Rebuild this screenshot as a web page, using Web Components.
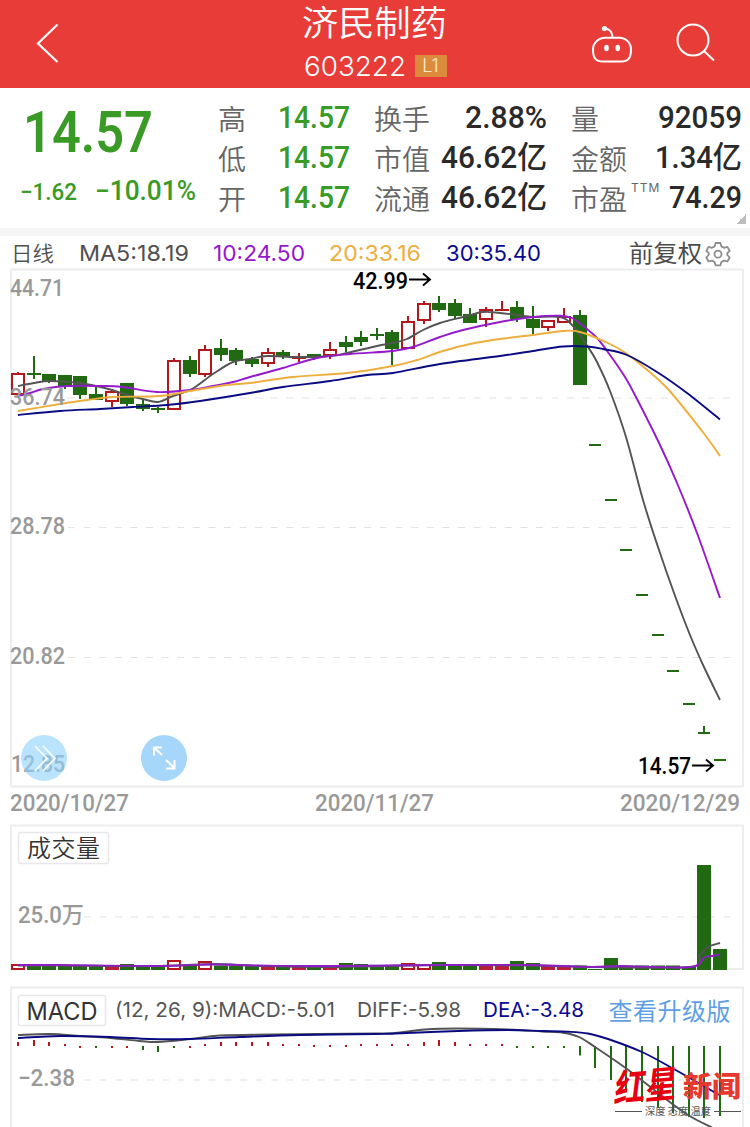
<!DOCTYPE html>
<html lang="zh-CN">
<head>
<meta charset="utf-8">
<title>济民制药 603222</title>
<style>
  html, body { margin: 0; padding: 0; }
  body {
    width: 750px;
    height: 1127px;
    overflow: hidden;
    background: #fff;
    font-family: Inter, "Noto Sans CJK SC", sans-serif;
  }
</style>
</head>
<body>
<stock-page></stock-page>

<script>
const DIN = 'Roboto, "Noto Sans CJK SC", sans-serif';
const UI = 'Inter, "Noto Sans CJK SC", sans-serif';
const GREEN = '#216a12';
const RED = '#b3191c';
const STEP = 15.6;
const cx = i => 18 + STEP * i;

/** Base class: attaches an open shadow root and fills it from render(). */
class BaseElement extends HTMLElement {
  connectedCallback() {
    if (this.shadowRoot) return;
    this.attachShadow({ mode: 'open' }).innerHTML = this.render();
    this.ready();
  }
  ready() {}
}

/**
 * Text squeezed or stretched to a fixed width.
 * @attr {number} w - target width in px
 */
class FitText extends BaseElement {
  render() {
    return `
      <style>
        :host { display: inline-block; white-space: nowrap; flex: none; }
        span { display: inline-block; transform-origin: 0 50%; }
      </style>
      <span><slot></slot></span>`;
  }
  ready() {
    const w = parseFloat(this.getAttribute('w'));
    const span = this.shadowRoot.querySelector('span');
    const natural = span.getBoundingClientRect().width;
    this.style.width = `${w}px`;
    if (natural) span.style.transform = `scaleX(${w / natural})`;
  }
}

/** Red title bar with back, assistant and search icons. */
class AppHeader extends BaseElement {
  render() {
    return `
      <style>
        :host { display: grid; grid-template-columns: 250px 250px 250px; height: 88px; background: #e83c38; color: #fff; }
        svg { display: block; fill: none; stroke: #fff; }
        .back { padding: 22px 0 0 34px; }
        .title { display: flex; flex-direction: column; align-items: center; }
        .name { font: 350 35px/41px "Liberation Sans", "Noto Sans CJK SC", sans-serif; height: 43px; padding-top: 3px; margin-right: 2px; }
        .code { display: flex; align-items: center; height: 40px; gap: 9px; font-weight: 300; font-size: 27px; }
        .level { width: 32px; height: 22px; background: #dc8b3c; font-size: 18px; line-height: 22px; text-align: center; color: #ffe9c8; }
        .tools { display: flex; gap: 42px; padding: 22px 0 0 90px; }
      </style>
      <div class="back"><svg width="28" height="44" stroke-width="2.2"><path d="M23.500 2.500 4 21.500 23.500 40"/></svg></div>
      <div class="title">
        <div class="name"><fit-text w="145">济民制药</fit-text></div>
        <div class="code"><fit-text w="102">603222</fit-text><span class="level">L1</span></div>
      </div>
      <div class="tools">
        <svg width="44" height="44" stroke-width="2">
          <path d="M15.500 15.800h13.500c7 0 12 5 12 11.700 0 9-3 12-10 12H13c-7 0-10-3-10-12 0-6.700 5.500-11.700 12.500-11.700z"/>
          <path d="M22.500 15.800c0-5-2.500-9-7.500-9.300"/>
          <circle cx="14.500" cy="6.500" r="2.600" fill="#fff" stroke="none"/>
          <ellipse cx="16.500" cy="26" rx="2.300" ry="3.200" fill="#fff" stroke="none"/>
          <ellipse cx="27.700" cy="26" rx="2.300" ry="3.200" fill="#fff" stroke="none"/>
        </svg>
        <svg width="44" height="44" stroke-width="2"><circle cx="17" cy="18" r="15.500"/><path d="M28 29 38 38.500"/></svg>
      </div>`;
  }
}

/** Label and value in one line of the quote block. */
class QuoteStat extends BaseElement {
  render() {
    const sup = this.getAttribute('sup');
    return `
      <style>
        :host { display: flex; justify-content: space-between; height: 40px; line-height: 40px; }
        .label { font: 350 28px/40px "Noto Sans CJK SC", sans-serif; color: #666; white-space: nowrap; margin-left: -1px; }
        .value { font: 500 30.500px/40px ${DIN}; color: var(--value, #2a2a2a); height: 40px; }
        sup { font: 400 12px/14px ${UI}; vertical-align: 18px; letter-spacing: 1px; margin-left: 4px; }
      </style>
      <span class="label">${this.getAttribute('label')}${sup ? `<sup>${sup}</sup>` : ''}</span>
      <fit-text class="value" w="${this.getAttribute('w')}"><slot></slot></fit-text>`;
  }
}

/** Last price, change and the three columns of figures. */
class QuotePanel extends BaseElement {
  render() {
    return `
      <style>
        :host { display: flex; position: relative; height: 148px; border-bottom: 8px solid #f5f5f6; box-sizing: border-box; }
        .last { width: 219px; color: #3a9a26; font-family: ${DIN}; box-sizing: border-box; padding-left: 20px; }
        .price { font-weight: 600; font-size: 57px; line-height: 60px; height: 60px; padding: 15px 0 0 3px; }
        .change { display: flex; align-items: baseline; gap: 18px; height: 40px; line-height: 40px; padding-top: 8px; font-weight: 500; }
        .pct { font-size: 27px; }
        .diff { font-size: 24px; }
        .cols { display: flex; gap: 25px; padding-top: 10px; }
        .up { width: 131px; --value: #3a9a26; }
        .mid { width: 172px; }
        .end { width: 170px; }
        .corner { position: absolute; right: 4px; bottom: 4px; width: 10px; height: 10px; background: linear-gradient(135deg, transparent 50%, #bdbdbd 50%); }
      </style>
      <div class="last">
        <div class="price"><fit-text w="130">14.57</fit-text></div>
        <div class="change"><fit-text class="diff" w="57">−1.62</fit-text><fit-text class="pct" w="101">−10.01%</fit-text></div>
      </div>
      <div class="cols">
        <div class="up">
          <quote-stat label="高" w="72">14.57</quote-stat>
          <quote-stat label="低" w="72">14.57</quote-stat>
          <quote-stat label="开" w="72">14.57</quote-stat>
        </div>
        <div class="mid">
          <quote-stat label="换手" w="82">2.88%</quote-stat>
          <quote-stat label="市值" w="106">46.62亿</quote-stat>
          <quote-stat label="流通" w="106">46.62亿</quote-stat>
        </div>
        <div class="end">
          <quote-stat label="量" w="84">92059</quote-stat>
          <quote-stat label="金额" w="87">1.34亿</quote-stat>
          <quote-stat label="市盈" sup="TTM" w="73">74.29</quote-stat>
        </div>
      </div>
      <i class="corner"></i>`;
  }
}

/** Moving average legend above the main chart. */
class MaLegend extends BaseElement {
  render() {
    return `
      <style>
        :host { display: flex; height: 33px; padding: 0 19px 0 11px; box-sizing: border-box; font-size: 22px; line-height: 35px; color: #505050; }
        .period { font: 350 21px/33px "Noto Sans CJK SC", sans-serif; margin-right: 25px; }
        .adjust { font: 400 23.500px/32px "Noto Sans CJK SC", sans-serif; margin-left: auto; color: #4c4c4c; }
        svg { margin: 5px 0 0 3px; }
      </style>
      <fit-text class="period" w="43">日线</fit-text>
      <fit-text w="110">MA5:18.19</fit-text>
      <fit-text w="92" style="margin-left:24px;color:#9418cc">10:24.50</fit-text>
      <fit-text w="92" style="margin-left:24px;color:#ecae3d">20:33.16</fit-text>
      <fit-text w="95" style="margin-left:25px;color:#0a0a90">30:35.40</fit-text>
      <fit-text class="adjust" w="73">前复权</fit-text>
      <svg width="26" height="26" fill="none" stroke="#8c8c8c" stroke-width="1.800" stroke-linejoin="round">
        <path d="M10.600 2h4.800l1 3.400 2.600 1.400 3.400-.9 2.300 4-2.400 2.300v1.800l2.400 2.500-2.300 4-3.400-.9-2.600 1.400-1 3.300h-4.800l-1-3.300L7 19.600l-3.400.9-2.300-4L3.700 14v-1.800L1.300 9.900l2.300-4 3.400.9 2.600-1.400z"/>
        <circle cx="13" cy="13.200" r="3.500"/>
      </svg>`;
  }
}

/** Shared helpers for the three SVG panels. */
class ChartBase extends BaseElement {
  /** Smooth curve through the given points. */
  curve(points, color, width = 1.900) {
    let d = `M${points[0]}`;
    for (let i = 0; i < points.length - 1; i++) {
      const a = points[i - 1] || points[i];
      const b = points[i];
      const c = points[i + 1];
      const e = points[i + 2] || c;
      d += `C${b[0] + (c[0] - a[0]) / 6},${b[1] + (c[1] - a[1]) / 6} ${c[0] - (e[0] - b[0]) / 6},${c[1] - (e[1] - b[1]) / 6} ${c}`;
    }
    return `<path d="${d}" fill="none" stroke="${color}" stroke-width="${width}"/>`;
  }
  grid(y, from = 68) {
    return `<path d="M${from} ${y}H737" stroke="#e2e2e4" stroke-width="1.200" stroke-dasharray="7 8.600"/>`;
  }
  label(x, y, w, text, color = '#999') {
    return `<text x="${x}" y="${y}" textLength="${w}" lengthAdjust="spacingAndGlyphs" fill="${color}">${text}</text>`;
  }
  svg(top, height, body) {
    return `
      <style>
        :host { display: block; height: ${height}px; }
        svg { display: block; overflow: visible; font: 500 23px ${DIN}; }
      </style>
      <svg width="750" height="${height}" viewBox="0 ${top} 750 ${height}">${body}</svg>`;
  }
}

// [up, bodyTop, bodyBottom, high, low] for each session, in chart units
const CANDLES = [
  [1, 373, 395, 372, 395], [0, 373, 375, 356, 379], [0, 374, 381, 374, 383], [0, 375, 387, 375, 389],
  [0, 376, 395, 376, 399], [0, 394, 400, 387, 400], [1, 391, 402, 389, 407], [0, 383, 404, 383, 406],
  [0, 404, 409, 399, 411], [0, 408, 410, 407, 413], [1, 360, 410, 358, 410], [0, 360, 374, 356, 377],
  [1, 349, 375, 345, 377], [0, 348, 355, 339, 361], [0, 350, 361, 348, 365], [0, 359, 364, 357, 367],
  [1, 352, 364, 348, 367], [0, 352, 357, 350, 359], [1, 357, 359, 353, 362], [0, 354, 358, 354, 360],
  [1, 349, 356, 342, 359], [0, 342, 347, 336, 352], [0, 337, 342, 331, 346], [0, 334, 336, 328, 340],
  [0, 332, 349, 330, 365], [1, 321, 349, 316, 349], [1, 303, 321, 301, 324], [0, 303, 310, 296, 312],
  [0, 303, 316, 299, 319], [0, 314, 323, 308, 323], [1, 309, 320, 307, 327], [1, 309, 311, 301, 311],
  [0, 307, 319, 301, 322], [0, 319, 328, 306, 334], [1, 320, 328, 320, 331], [1, 316, 323, 308, 323],
  [0, 315, 385, 310, 385], [0, 444, 446, 444, 446], [0, 499, 501, 499, 501], [0, 549, 551, 549, 551],
  [0, 594, 596, 594, 596], [0, 634, 636, 634, 636], [0, 670, 672, 670, 672], [0, 703, 705, 703, 705],
  [0, 732, 734, 726, 734], [0, 759, 761, 759, 761]
];

const MA5 = [[18,386],[34,383],[50,381],[80,383],[96,386],[112,390],[127,395],[143,399],[158,402],[173,396],[192,389],[213,374],[233,362],[250,359],[267,356],[297,357],[330,356],[347,353],[377,346],[393,343],[407,339],[423,330],[440,323],[463,317],[483,312],[500,313],[517,315],[533,317],[560,317],[573,326],[588,347],[597,362],[610,391],[626,437],[643,500],[658,547],[674,593],[690,635],[704,667],[720,700]];
const MA10 = [[18,396],[30,393],[43,389],[67,386],[100,386],[123,387],[157,392],[190,390],[213,386],[233,382],[250,377],[283,368],[317,358],[350,354],[393,351],[413,347],[440,337],[463,330],[500,322],[533,317],[560,315.7],[572,318],[583,326],[597,338],[610,355],[625,377],[637,399],[660,445],[677,483],[697,533],[720,598]];
const MA20 = [[18,411],[60,404],[87,400],[113,397],[160,396],[190,391],[227,385],[250,383],[293,377],[347,373],[393,366],[417,360],[443,351],[470,344],[500,339],[533,335],[563,331],[580,332],[610,344],[627,354],[640,364],[667,388],[702,431],[720,456]];
const MA30 = [[18,415],[60,411],[100,409],[133,407],[167,405],[200,401],[250,393],[283,387],[330,381],[367,375],[393,373],[440,364],[500,356],[533,351],[563,346.500],[587,346.500],[603,349],[627,355],[657,372],[687,393],[720,419.500]];

/** Daily candlesticks with the four moving averages. */
class KlineChart extends ChartBase {
  candle([up, top, bottom, high, low], i) {
    const x = Math.round(cx(i));
    const color = up ? RED : GREEN;
    const flat = bottom - top < 3;
    const half = i > 36 ? 6 : 7;
    let out = '';
    if (high < top) out += `<path d="M${x} ${high}V${top}" stroke="${color}" stroke-width="2"/>`;
    if (low > bottom) out += `<path d="M${x} ${bottom}V${low}" stroke="${color}" stroke-width="2"/>`;
    out += up && !flat
      ? `<rect x="${x - 6}" y="${top + 1}" width="12" height="${bottom - top - 2}" fill="#fff" stroke="${color}" stroke-width="2"/>`
      : `<rect x="${x - half}" y="${top}" width="${half * 2}" height="${bottom - top}" fill="${color}"/>`;
    return out;
  }
  render() {
    const arrow = (x, y) => `<path d="M${x} ${y}h21m-7-6 7 6-7 6" fill="none" stroke="#000" stroke-width="1.900"/>`;
    return this.svg(269, 519, `
      <rect x="11" y="269.500" width="732" height="517" fill="none" stroke="#ececee" stroke-width="1.800"/>
      ${this.grid(398)}${this.grid(527.500)}${this.grid(657.500)}
      ${CANDLES.map((c, i) => this.candle(c, i)).join('')}
      ${this.curve(MA5, '#545454')}
      ${this.curve(MA10, '#9519cd')}
      ${this.curve(MA20, '#edae3e')}
      ${this.curve(MA30, '#0a0a82')}
      ${this.label(10, 296, 54, '44.71')}
      ${this.label(10, 404.500, 55, '36.74')}
      ${this.label(10, 533.500, 55, '28.78')}
      ${this.label(10, 663.500, 55, '20.82')}
      ${this.label(11, 771.500, 54, '12.85')}
      ${this.label(353, 288.500, 55, '42.99', '#000')}${arrow(409, 279.500)}
      ${this.label(638, 773.500, 53, '14.57', '#000')}${arrow(692, 765.500)}`);
  }
}

/** Round button floating over the chart. */
class RoundButton extends BaseElement {
  render() {
    const icon = this.getAttribute('icon') === 'next'
      ? '<path d="M14 11 26 23.500 14 36M22 11 34 23.500 22 36" stroke-width="1.500"/>'
      : '<path d="M13 20.500V12.500h8M13 12.500l8 7.500M25 25l8.500 8M33.500 25v8.500h-8.500" stroke-width="2"/>';
    return `
      <style>
        :host { display: block; width: 46px; height: 46px; border-radius: 50%; background: var(--disc); }
        svg { display: block; fill: none; stroke: #fff; }
      </style>
      <svg width="46" height="46">${icon}</svg>`;
  }
}

/** First, middle and last date of the range. */
class DateAxis extends BaseElement {
  render() {
    return `
      <style>
        :host { display: flex; justify-content: space-between; height: 36px; padding: 0 10px; font: 500 23px/32px ${DIN}; color: #999; }
      </style>
      <fit-text w="119">2020/10/27</fit-text>
      <fit-text w="119">2020/11/27</fit-text>
      <fit-text w="120">2020/12/29</fit-text>`;
  }
}

/** Volume histogram. */
class VolumeChart extends ChartBase {
  render() {
    const tops = { 0: 964, 7: 964, 10: 960, 12: 961, 21: 963, 22: 964, 25: 963, 26: 964, 27: 962, 32: 961, 33: 963, 37: 969, 38: 958, 43: 967, 44: 865, 45: 949 };
    const hollow = [0, 10, 12, 25, 26];
    const ups = [6, 16, 18, 20, 30, 31, 34, 35];
    const bars = CANDLES.map((_, i) => {
      const x = Math.round(cx(i)) - 7;
      const y = tops[i] || 965.500;
      return hollow.includes(i)
        ? `<rect x="${x + 1}" y="${y + 1}" width="12" height="${968 - y}" fill="#fff" stroke="${RED}" stroke-width="2"/>`
        : `<rect x="${x}" y="${y}" width="14" height="${970 - y}" fill="${ups.includes(i) ? '#b81f38' : GREEN}"/>`;
    }).join('');
    return this.svg(824, 147, `
      <rect x="11" y="825.500" width="732" height="143.500" fill="none" stroke="#ececee" stroke-width="1.800"/>
      ${this.grid(917, 84)}
      <rect x="18.500" y="832.500" width="90" height="31" rx="2" fill="#fff" stroke="#e8e8ec" stroke-width="1.500"/>
      <text x="27" y="857" textLength="73" style="font:350 24px 'Noto Sans CJK SC'" fill="#333">成交量</text>
      ${this.label(18, 923, 66, '25.0万')}
      ${bars}
      ${this.curve([[18,965.500],[60,965.500],[160,966],[215,964],[260,966],[330,967],[440,965],[530,965.500],[600,967],[690,967],[700,955],[708,947],[720,943]], '#58505c')}
      ${this.curve([[18,965],[60,965],[160,966],[210,964.500],[260,965.500],[330,966],[440,965],[530,965],[590,967],[620,966],[690,967],[704,957.500],[712,956],[720,954.500]], '#8c1fc4')}`);
  }
}

/** MACD histogram with DIFF and DEA lines. */
class MacdChart extends ChartBase {
  render() {
    const hist = [-4, -6, -4, -2, 1, 1, 1, 1, 4, 6, 1, 1, -2, -4, -4, -4, -4, -2, -2, -1, -1, -1, -2, -2, -2, -2, -4, -6, -4, -2, -2, -2, 1, 1, 1, 1, 9.5, 22, 34, 46, 56, 62, 67, 71, 72, 70];
    const bars = hist.map((h, i) => {
      const small = Math.abs(h) < 3;
      const up = h < 0 || (i > 3 && i < 12 && small && i % 5 !== 0);
      const y = h < 0 ? 1046 + h : 1046;
      return `<rect x="${Math.round(cx(i)) - 1}" y="${y}" width="2" height="${small ? 2 : Math.abs(h)}" fill="${up ? RED : GREEN}"/>`;
    }).join('');
    const info = (x, w, text, color) => `<text x="${x}" y="1016.500" textLength="${w}" lengthAdjust="spacingAndGlyphs" style="font:400 20px ${UI.replace(/"/g, "'")}" fill="${color}">${text}</text>`;
    return this.svg(971, 156, `
      <path d="M11 1130V987.500H743V1130" fill="none" stroke="#ececee" stroke-width="1.800"/>
      ${this.grid(1080, 84)}
      <rect x="18.500" y="995.500" width="87" height="30" rx="2" fill="#fff" stroke="#e8e8ec" stroke-width="1.500"/>
      <text x="26.500" y="1020" textLength="71" lengthAdjust="spacingAndGlyphs" style="font:400 24px Inter" fill="#333">MACD</text>
      ${info(115, 220, '(12, 26, 9):MACD:-5.01', '#555')}
      ${info(357, 104, 'DIFF:-5.98', '#555')}
      ${info(483, 101, 'DEA:-3.48', '#0a0a90')}
      <text x="608.500" y="1020" textLength="122" style="font:400 24px 'Noto Sans CJK SC'" fill="#5f9fe4">查看升级版</text>
      ${this.label(18, 1086, 57, '−2.38')}
      ${bars}
      ${this.curve([[18,1035],[50,1034],[80,1036],[110,1038],[140,1041],[158,1042],[190,1039],[220,1035.500],[270,1034.500],[375,1033.500],[395,1033],[425,1029.500],[458,1028.500],[508,1029.500],[542,1031.500],[563,1032.700],[579,1037],[595,1047],[627,1069],[658,1093],[688,1115],[712,1127.500]], '#545454')}
      ${this.curve([[18,1038],[60,1036],[110,1037],[150,1039],[190,1039],[240,1037],[300,1035],[375,1034],[395,1033.500],[458,1031],[508,1030],[542,1031],[568,1031.700],[588,1033.500],[608,1039],[642,1052],[672,1068],[702,1085],[719,1095]], '#0a0a82')}`);
  }
}

/** News agency mark laid over the lower right corner. */
class NewsMark extends BaseElement {
  render() {
    return `
      <style>
        :host { display: block; width: 126px; }
        .brand { display: flex; align-items: flex-end; height: 43px; }
        .brush { font: 700 37px/43px "Noto Sans CJK SC", sans-serif; color: #e60012; transform: rotate(-5deg) skewX(-12deg); margin-right: 1px; }
        .plain { font: 900 28px/28px "Noto Sans CJK SC", sans-serif; color: #e8392f; margin-bottom: 6px; }
        .tag { display: flex; align-items: center; gap: 3px; font: 400 10.500px/12px "Noto Sans CJK SC", sans-serif; color: #555; }
        .tag::before, .tag::after { content: ""; flex: 1; height: 1px; background: #555; }
      </style>
      <div class="brand"><fit-text class="brush" w="67">红星</fit-text><fit-text class="plain" w="58">新闻</fit-text></div>
      <div class="tag"><fit-text w="66">深度 态度 温度</fit-text></div>`;
  }
}

/** Whole screen. */
class StockPage extends BaseElement {
  render() {
    return `
      <style>
        :host { display: flex; flex-direction: column; position: relative; width: 750px; height: 1127px; overflow: hidden; background: #fff; }
        .main { position: relative; }
        .buttons { position: absolute; left: 21px; bottom: 7px; display: flex; gap: 74px; }
        .next { --disc: rgba(143, 210, 252, .62); }
        .full { --disc: #a6d7fb; }
        news-mark { position: absolute; left: 615px; top: 1062px; }
      </style>
      <app-header></app-header>
      <quote-panel></quote-panel>
      <ma-legend></ma-legend>
      <div class="main">
        <kline-chart></kline-chart>
        <div class="buttons">
          <round-button class="next" icon="next"></round-button>
          <round-button class="full" icon="full"></round-button>
        </div>
      </div>
      <date-axis></date-axis>
      <volume-chart></volume-chart>
      <macd-chart></macd-chart>
      <news-mark></news-mark>`;
  }
}

customElements.define('fit-text', FitText);
customElements.define('app-header', AppHeader);
customElements.define('quote-stat', QuoteStat);
customElements.define('quote-panel', QuotePanel);
customElements.define('ma-legend', MaLegend);
customElements.define('kline-chart', KlineChart);
customElements.define('round-button', RoundButton);
customElements.define('date-axis', DateAxis);
customElements.define('volume-chart', VolumeChart);
customElements.define('macd-chart', MacdChart);
customElements.define('news-mark', NewsMark);
customElements.define('stock-page', StockPage);
</script>
</body>
</html>
